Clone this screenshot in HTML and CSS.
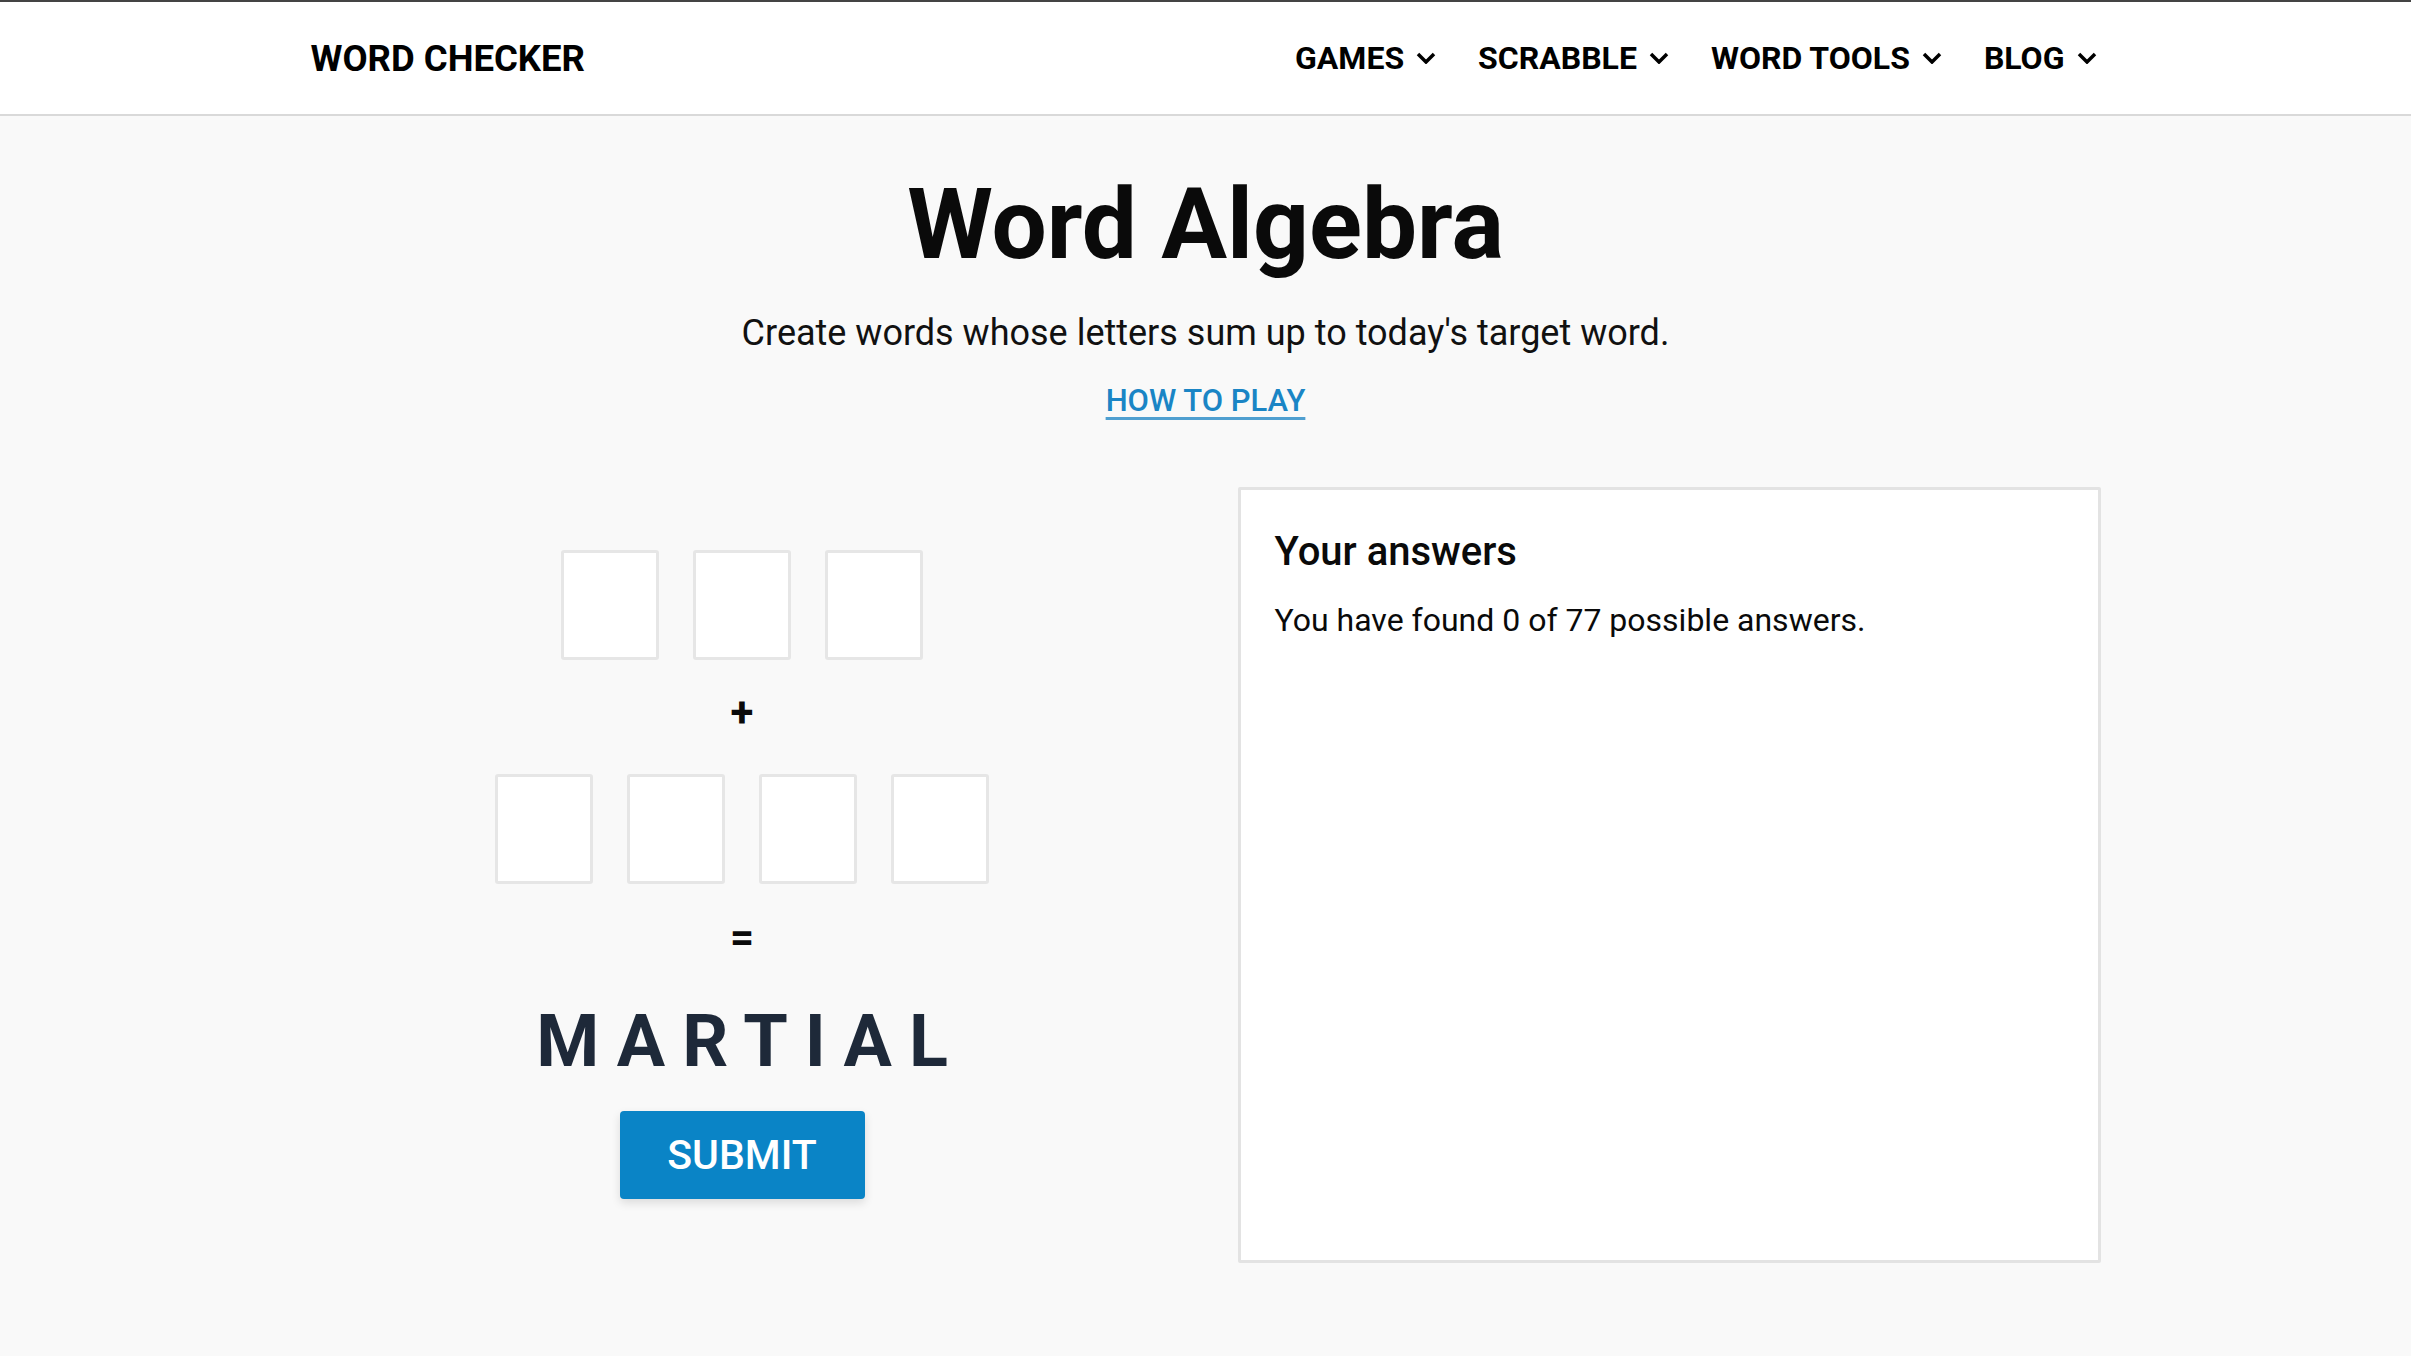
FILE: index.html
```html
<!DOCTYPE html>
<html lang="en">
<head>
    <meta charset="UTF-8">
    <meta name="viewport" content="width=device-width, initial-scale=1.0">
    <title>Word Algebra - Word Checker</title>
    <link rel="stylesheet" href="styles.css">
</head>
<body>

    <!-- Top Navigation -->
    <header class="site-header">
        <div class="container header-inner">
            <a class="brand" href="#">WORD CHECKER</a>
            <nav class="main-nav">
                <a class="nav-item" href="#">GAMES
                    <svg class="chev" viewBox="0 0 20 12"><path d="M2 2l8 8 8-8"/></svg>
                </a>
                <a class="nav-item" href="#">SCRABBLE
                    <svg class="chev" viewBox="0 0 20 12"><path d="M2 2l8 8 8-8"/></svg>
                </a>
                <a class="nav-item" href="#">WORD TOOLS
                    <svg class="chev" viewBox="0 0 20 12"><path d="M2 2l8 8 8-8"/></svg>
                </a>
                <a class="nav-item" href="#">BLOG
                    <svg class="chev" viewBox="0 0 20 12"><path d="M2 2l8 8 8-8"/></svg>
                </a>
            </nav>
        </div>
    </header>

    <main class="container">
        <!-- Intro -->
        <section class="intro">
            <h1 class="title">Word Algebra</h1>
            <p class="lead">Create words whose letters sum up to today's target word.</p>
            <a class="how-to" href="#">HOW TO PLAY</a>
        </section>

        <!-- Game -->
        <section class="game">
            <div class="puzzle">
                <div class="tiles">
                    <input class="tile" maxlength="1">
                    <input class="tile" maxlength="1">
                    <input class="tile" maxlength="1">
                </div>
                <div class="op plus">+</div>
                <div class="tiles">
                    <input class="tile" maxlength="1">
                    <input class="tile" maxlength="1">
                    <input class="tile" maxlength="1">
                    <input class="tile" maxlength="1">
                </div>
                <div class="op equals">=</div>
                <div class="target">MARTIAL</div>
                <button class="submit">SUBMIT</button>
            </div>

            <div class="answers">
                <h2 class="answers-title">Your answers</h2>
                <p class="answers-count">You have found 0 of 77 possible answers.</p>
            </div>
        </section>
    </main>

</body>
</html>
```

FILE: styles.css
```css
body {
    font-family: Roboto, "Liberation Sans", sans-serif;
    margin: 0;
    padding: 0;
    background: #f9f9f9;
    color: #0a0a0a;
}

.container {
    width: 1790px;
    margin: 0 auto;
}

/* Header */
.site-header {
    background: #fff;
    border-top: 2px solid #444;
    border-bottom: 2px solid #d9d9d9;
}
.header-inner {
    height: 112px;
    display: flex;
    align-items: center;
    justify-content: space-between;
}
.brand {
    font-size: 36.5px;
    font-weight: 700;
    color: #000;
    text-decoration: none;
}
.main-nav {
    display: flex;
    gap: 42px;
    padding-right: 4px;
}
.nav-item {
    display: flex;
    align-items: center;
    gap: 12px;
    font-size: 32px;
    font-weight: 700;
    color: #000;
    text-decoration: none;
}
.chev {
    width: 20px;
    height: 12px;
    fill: none;
    stroke: #000;
    stroke-width: 3.5;
}

/* Intro */
.intro {
    text-align: center;
    padding-top: 50px;
}
.title {
    font-size: 98px;
    font-weight: 700;
    line-height: 1.2;
    margin: 0;
}
.lead {
    font-size: 36px;
    margin: 28px 0 0;
    color: #111;
}
.how-to {
    display: inline-block;
    margin-top: 28px;
    font-size: 31px;
    font-weight: 500;
    color: #1a85c5;
    text-decoration: underline;
    text-decoration-color: #4f9fd0;
    text-decoration-thickness: 3px;
    text-underline-offset: 6px;
}

/* Game area */
.game {
    display: grid;
    grid-template-columns: 1fr 1fr;
    gap: 64px;
    margin-top: 68px;
    margin-bottom: 94px;
}
.puzzle {
    display: flex;
    flex-direction: column;
    align-items: center;
    justify-content: center;
}
.tiles {
    display: flex;
    gap: 34px;
}
.tile {
    width: 98px;
    height: 110px;
    box-sizing: border-box;
    border: 3px solid #e6e6e6;
    border-radius: 3px;
    background: #fff;
    font-size: 48px;
    text-align: center;
    text-transform: uppercase;
    padding: 0;
}
.op {
    font-size: 42px;
    font-weight: 700;
    text-align: center;
}
.plus {
    line-height: 106px;
    padding-bottom: 8px;
}
.equals {
    line-height: 100px;
    padding-top: 4px;
}
.target {
    font-size: 72px;
    font-weight: 700;
    line-height: 1;
    letter-spacing: 17px;
    padding-left: 17px;
    color: #1e2939;
    margin-top: 18px;
}
.submit {
    margin-top: 33px;
    width: 245px;
    height: 88px;
    background: #0a84c6;
    color: #fff;
    border: none;
    border-radius: 4px;
    font-family: inherit;
    font-size: 41px;
    font-weight: 500;
    box-shadow: 0 4px 10px rgba(0, 0, 0, 0.12);
    cursor: pointer;
}

/* Answers panel */
.answers {
    background: #fff;
    border: 3px solid #e3e3e3;
    border-radius: 2px;
    min-height: 776px;
    box-sizing: border-box;
    padding: 38px 34px;
}
.answers-title {
    font-size: 40px;
    font-weight: 500;
    margin: 0;
}
.answers-count {
    font-size: 32px;
    margin: 26px 0 0;
}
```
